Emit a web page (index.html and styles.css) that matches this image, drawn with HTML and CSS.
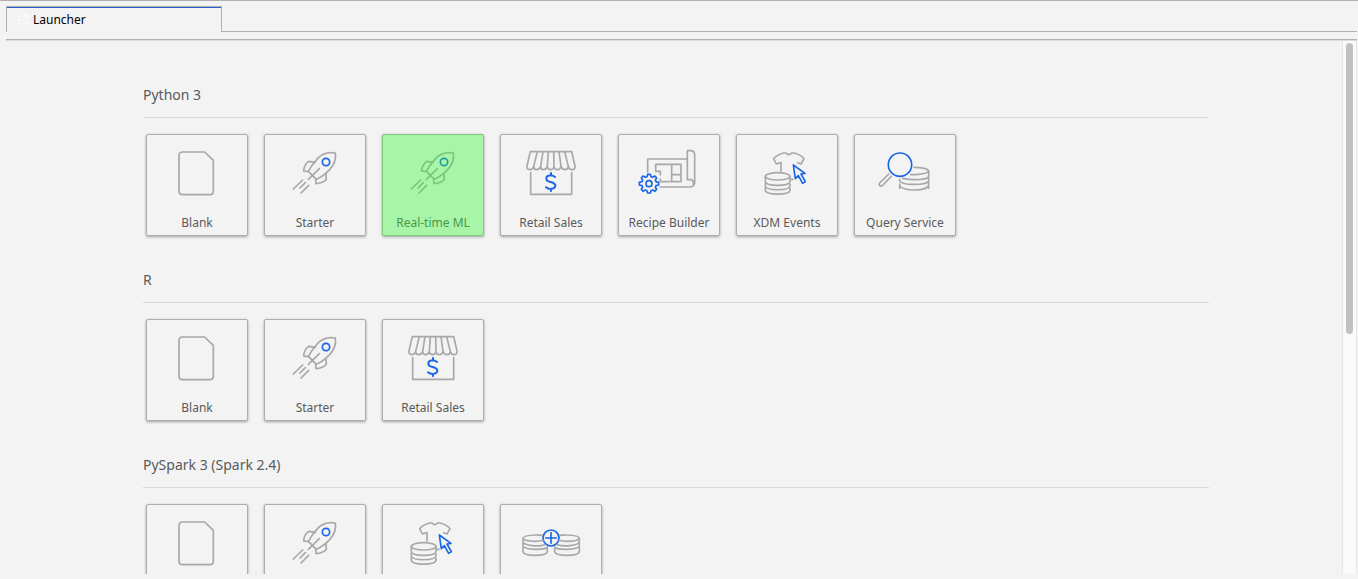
FILE: index.html
```html
<!DOCTYPE html>
<html lang="en">
<head>
<meta charset="utf-8">
<title>Launcher</title>
<link rel="stylesheet" href="styles.css">
</head>
<body>
<svg class="sprite" aria-hidden="true">
  <symbol id="blank" viewBox="75 51 192 192">
    <path d="M128 81H194L220 106V198Q220 209 209 209H128Q117 209 117 198V92Q117 81 128 81Z"/>
  </symbol>
  <symbol id="rocket" viewBox="75 51 192 192">
    <path d="M232 84Q200 78 179 100Q161 120 151 139L175 163Q196 154 215 134Q236 112 232 84Z"/>
    <path d="M172 112L152 109Q138 119 137 138L151 140M204 147L205 163Q195 175 174 176L173 163M184 131L151 163M161 149L165 154M134 165L106 192M142 173L126 189M152 181L129 204"/>
    <circle class="accent" cx="204" cy="111" r="11"/>
  </symbol>
  <symbol id="store" viewBox="75 51 192 192">
    <path d="M109 80H233L243 123Q244 134 234 134Q225 134 223 124Q222 134 213 134Q204 134 201 124Q199 134 190 134Q181 134 180 124Q178 134 170 134Q161 134 160 124Q157 134 149 134Q140 134 140 124Q137 134 128 134Q119 134 119 124Q117 134 107 134Q97 133 99 123L109 80M130 80L119 124M147 80L140 124M163 80L160 124M179 80L180 124M195 80L201 124M212 80L223 124M110 143V208H233V143"/>
    <path class="accent bold" d="M183 156Q177 151 169 151Q157 152 157 161Q157 168 170 171Q184 175 184 182Q183 191 170 192Q162 192 156 187M171 144V151M171 192V198"/>
  </symbol>
  <symbol id="recipe" viewBox="75 51 192 192">
    <path d="M107 142V102H225M145 186H236Q248 184 248 172V88Q247 77 235 77H226V164H236Q246 166 244 178M131 139V118H207V170H147M131 139H145V150M179 118V170M179 149H207M145 162V170"/>
    <circle class="accent" cx="111" cy="176" r="9"/>
    <path class="accent" d="M107 148H115L117 155L122 157L129 153L134 159L130 165L132 170L140 172V180L132 182L130 187L134 193L129 199L122 195L117 197L115 204H107L105 197L100 195L93 199L88 193L92 187L90 182L82 180V172L90 170L92 165L88 159L93 153L100 157L105 155Z"/>
  </symbol>
  <symbol id="events" viewBox="75 51 192 192">
    <path d="M153 138V113L139 117L131 101Q143 88 161 84H168Q176 94 185 84H192Q211 88 222 101L213 117L203 113M183 163H189"/>
    <ellipse cx="143" cy="154" rx="37" ry="11"/>
    <path d="M106 154V170C108 185 178 185 180 170V154M106 175V183C108 198 178 198 180 183V177M106 188V196C108 211 178 211 180 196V190"/>
    <path class="accent" d="M190 120L196 161L205 152L218 175L226 170L213 147L225 145Z"/>
  </symbol>
  <symbol id="query" viewBox="75 51 192 192">
    <circle class="accent" cx="156" cy="119" r="35"/>
    <path d="M122 147L95 174Q92 179 96 183Q101 185 105 180L130 154M198 127Q235 127 242 137Q240 149 188 149M242 137V154C238 164 200 167 164 160M242 158V167C238 182 158 182 155 167V164M242 172V180C238 200 158 200 155 180V177M242 184V190M155 184V190"/>
  </symbol>
  <symbol id="merge" viewBox="75 96 192 192">
    <circle class="accent" cx="171" cy="174" r="24"/>
    <path class="accent" d="M155 174H187M171 158V190"/>
    <path d="M144 166Q133 164 124 165Q88 166 87 175Q90 184 124 184Q138 184 147 181M87 175V185C89 199 138 200 152 194M87 189V197C89 211 158 211 160 201M87 202V215C89 230 158 230 160 215V206M198 166Q209 164 218 165Q255 166 256 175Q252 184 218 184Q204 184 196 181M256 175V185C253 199 205 200 190 194M256 189V197C254 211 184 211 182 201M256 202V215C254 230 184 230 182 215V206"/>
  </symbol>
</svg>

<div class="app">
  <nav class="tabs" role="tablist">
    <button class="tab" role="tab" aria-selected="true">
      <svg class="tab-icon" viewBox="0 0 12 12" aria-hidden="true"><path d="M5 2H2V10H10V7M7 1H11V5M11 1L5 7"/></svg>
      Launcher
    </button>
    <div class="tab-rest"></div>
  </nav>

  <div class="panel">
    <main class="content">
      <section>
        <h2>Python 3</h2>
        <div class="cards">
          <button class="card"><svg class="icon"><use href="#blank"/></svg><span>Blank</span></button>
          <button class="card"><svg class="icon"><use href="#rocket"/></svg><span>Starter</span></button>
          <button class="card highlight"><svg class="icon"><use href="#rocket"/></svg><span>Real-time ML</span></button>
          <button class="card"><svg class="icon"><use href="#store"/></svg><span>Retail Sales</span></button>
          <button class="card"><svg class="icon"><use href="#recipe"/></svg><span>Recipe Builder</span></button>
          <button class="card"><svg class="icon"><use href="#events"/></svg><span>XDM Events</span></button>
          <button class="card"><svg class="icon"><use href="#query"/></svg><span>Query Service</span></button>
        </div>
      </section>
      <section>
        <h2>R</h2>
        <div class="cards">
          <button class="card"><svg class="icon"><use href="#blank"/></svg><span>Blank</span></button>
          <button class="card"><svg class="icon"><use href="#rocket"/></svg><span>Starter</span></button>
          <button class="card"><svg class="icon"><use href="#store"/></svg><span>Retail Sales</span></button>
        </div>
      </section>
      <section>
        <h2>PySpark 3 (Spark 2.4)</h2>
        <div class="cards">
          <button class="card" aria-label="Blank"><svg class="icon"><use href="#blank"/></svg></button>
          <button class="card" aria-label="Starter"><svg class="icon"><use href="#rocket"/></svg></button>
          <button class="card" aria-label="Events"><svg class="icon"><use href="#events"/></svg></button>
          <button class="card" aria-label="Combine"><svg class="icon"><use href="#merge"/></svg></button>
        </div>
      </section>
    </main>
    <div class="scrollbar"><div class="thumb"></div></div>
  </div>
</div>
</body>
</html>
```
FILE: styles.css
```css
* { box-sizing: border-box; }

body {
  margin: 0;
  background: #f3f3f3;
  color: #5a5a5a;
  font-family: "Noto Sans", "Open Sans", sans-serif;
}

button {
  margin: 0;
  color: inherit;
  font-family: inherit;
}

.sprite {
  display: block;
  width: 0;
  height: 0;
}

.app {
  display: flex;
  flex-direction: column;
  height: 100vh;
  padding: 5px 1px 5px 6px;
  border-top: 1px solid #b0b0b0;
}

.tabs {
  display: flex;
  height: 26px;
  flex: none;
}

.tab {
  display: flex;
  align-items: center;
  gap: 4px;
  width: 216px;
  padding: 0 10px;
  border: 1px solid #b0b0b0;
  border-bottom: 0;
  background: #f3f3f3;
  box-shadow: inset 0 1px #2463c8;
  color: #000;
  font-size: 12px;
}

.tab-icon {
  width: 12px;
  height: 12px;
  fill: none;
  stroke: #fff;
}

.tab-rest {
  flex: 1;
  border-bottom: 1px solid #b0b0b0;
}

.panel {
  display: flex;
  flex: 1;
  min-height: 0;
  margin-top: 7px;
  border-top: 1px solid #b0b0b0;
  box-shadow: inset 0 1px #dcdcdc;
}

.content {
  flex: 1;
  padding: 43px 133px 0 137px;
  overflow: hidden;
}

section { height: 185px; }

h2 {
  margin: 0 0 16px;
  padding: 2px 0 12px;
  border-bottom: 1px solid #d8d8d8;
  font-size: 14px;
  font-weight: 400;
  line-height: 20px;
}

.cards {
  display: flex;
  gap: 16px;
  padding: 0 3px;
}

.card {
  position: relative;
  display: flex;
  flex-direction: column;
  align-items: center;
  justify-content: flex-start;
  flex: none;
  width: 102px;
  height: 102px;
  padding: 7px 0 0;
  border: 1px solid #adadad;
  border-radius: 2px;
  background: #f3f3f3;
  box-shadow: 0 1px 3px rgba(0, 0, 0, 0.35);
  font-size: 12px;
  line-height: 16px;
  white-space: nowrap;
}

.card span { margin-top: 9px; }

.highlight::after {
  content: "";
  position: absolute;
  inset: -1px;
  border-radius: 2px;
  background: rgba(47, 250, 47, 0.38);
}

.icon {
  width: 64px;
  height: 64px;
  flex: none;
  fill: none;
  stroke: #a8a8a8;
  stroke-width: 5px;
  stroke-linecap: round;
  stroke-linejoin: round;
}

.accent { stroke: #1b66e5; }
.bold { stroke-width: 6px; }

.scrollbar {
  width: 15px;
  margin-top: 1px;
  padding: 2px 3px;
  border: 1px solid #e6e6e6;
  border-width: 0 1px;
  background: #fafafa;
}

.thumb {
  height: 55%;
  border-radius: 4px;
  background: #c1c1c1;
}
```
